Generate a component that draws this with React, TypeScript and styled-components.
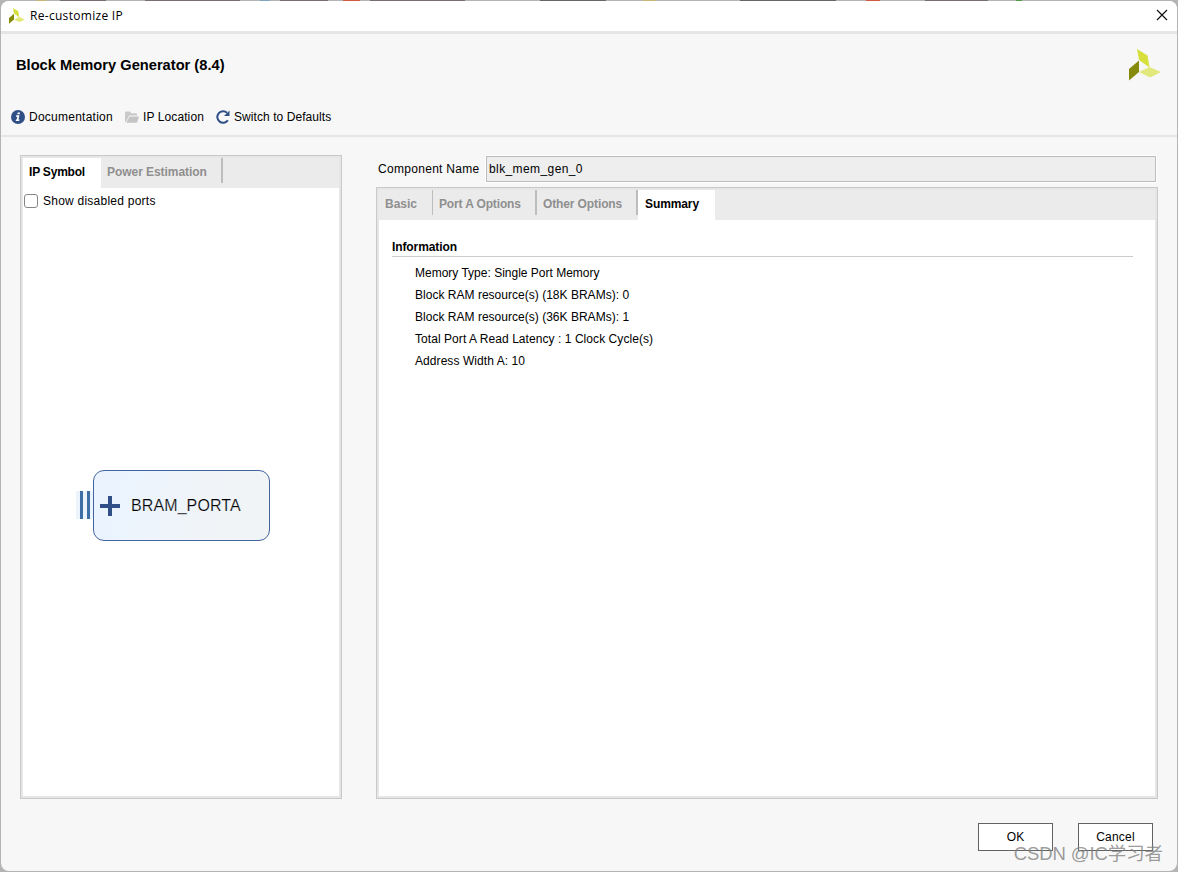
import React from "react";
import styled, { createGlobalStyle } from "styled-components";

const GlobalStyle = createGlobalStyle`
  *, *::before, *::after { box-sizing: border-box; }
  body {
    margin: 0;
    background: #b4b4b6;
    font: 12px/16px "Liberation Sans", Arial, sans-serif;
    color: #000;
    overflow: hidden;
  }
`;

const Desktop = styled.div`
  width: 1178px;
  height: 872px;
  padding: 1px;
  background: linear-gradient(
      90deg,
      transparent 36px, #c9b778 36px 46px, transparent 46px 60px, #77706f 60px 106px,
      transparent 106px 145px, #77706f 145px 240px, transparent 240px 260px, #7ea3bd 260px 270px,
      transparent 270px 280px, #77706f 280px 328px, transparent 328px 343px, #cf5a3f 343px 360px,
      transparent 360px 370px, #77706f 370px 465px, transparent 465px 540px, #66666a 540px 606px,
      transparent 606px 643px, #c9b778 643px 656px, transparent 656px 740px, #66666a 740px 836px,
      transparent 836px 866px, #cf5a3f 866px 880px, transparent 880px 925px, #77706f 925px 988px,
      transparent 988px 1016px, #4e9a45 1016px 1022px, transparent 1022px
    ) 0 0 / 100% 1px no-repeat;
`;

const Dialog = styled.div`
  width: 1176px;
  height: 870px;
  display: flex;
  flex-direction: column;
  background: #f7f7f7;
  border-radius: 8px;
  overflow: hidden;
`;

const Label = styled.span<{ $track?: number }>`
  white-space: pre;
  letter-spacing: ${(p) => p.$track ?? 0}px;
`;

const TitleBar = styled.header`
  display: flex;
  align-items: center;
  height: 33px;
  flex: none;
  background: #fff;
  border-bottom: 3px solid #e6e6e6;
  padding: 0 9px 0 8px;
`;

const WindowTitle = styled(Label)`
  flex: 1;
  margin-left: 5px;
  font-family: "Open Sans", "Noto Sans", sans-serif;
  font-size: 12px;
`;

const Header = styled.section`
  height: 103px;
  flex: none;
  display: flex;
  flex-direction: column;
  justify-content: space-between;
  border-bottom: 2px solid #e6e6e6;
  padding: 15px 16px 10px 10px;
`;

const HeadRow = styled.div`
  display: flex;
  justify-content: space-between;
  padding-left: 5px;
`;

const Heading = styled.h1`
  margin: 7px 0 0;
  font-size: 14.67px;
  line-height: 18px;
  font-weight: bold;
  white-space: pre;
`;

const Toolbar = styled.nav`
  display: flex;
  height: 16px;
`;

const Tool = styled.div<{ $width: number }>`
  display: flex;
  align-items: center;
  width: ${(p) => p.$width}px;
  gap: 4px;
  svg { flex: none; }
`;

const Body = styled.main`
  display: flex;
  height: 662px;
  flex: none;
  padding: 18px 19px 0;
`;

const Panel = styled.section<{ $width: number; $height: number }>`
  width: ${(p) => p.$width}px;
  height: ${(p) => p.$height}px;
  flex: none;
  display: flex;
  flex-direction: column;
  border: 1px solid #c9c9c9;
  box-shadow: inset 0 0 0 2px #e6e6e6;
  padding: 2px;
`;

const TabStrip = styled.div`
  display: flex;
  height: 30px;
  flex: none;
  background: #ebebeb;
`;

const Tab = styled.div<{ $width: number; $active?: boolean; $rule?: number; $track?: number; $indent?: number }>`
  width: ${(p) => p.$width}px;
  height: ${(p) => (p.$active ? 30 : 25)}px;
  padding: 6px 0 0 ${(p) => p.$indent ?? 6}px;
  font-weight: bold;
  white-space: pre;
  letter-spacing: ${(p) => p.$track ?? 0}px;
  color: ${(p) => (p.$active ? "#000" : "#8f8f8f")};
  background: ${(p) => (p.$active ? "#fff" : "transparent")};
  border-right: ${(p) => p.$rule ?? 0}px solid #bdbdbd;
`;

const Pane = styled.div`
  flex: 1;
  background: #fff;
`;

const CheckRow = styled.label`
  display: flex;
  align-items: center;
  height: 26px;
  padding-left: 1px;
  gap: 5px;
`;

const CheckBox = styled.span`
  width: 14px;
  height: 14px;
  border: 1px solid #858585;
  border-radius: 3px;
  background: #fff;
`;

const SymbolRow = styled.div`
  display: flex;
  align-items: flex-start;
  margin: 256px 0 0 53px;
`;

const PortHandle = styled.div`
  display: flex;
  gap: 4px;
  width: 17px;
  height: 28px;
  margin-top: 21px;
  padding-left: 4px;
  background: #ebf4fd;
`;

const PortBar = styled.span`
  width: 3px;
  background: #3d6fa5;
`;

const BlockSymbol = styled.div`
  display: flex;
  align-items: center;
  gap: 11px;
  width: 177px;
  height: 71px;
  padding-left: 6px;
  border: 1px solid #43659f;
  border-radius: 11px;
  background: linear-gradient(100deg, #ebf4fe 15%, #f0f4f8 60%, #f0f4f5);
`;

const PortName = styled(Label)`
  font-size: 16px;
  line-height: 20px;
  -webkit-text-stroke: 0.2px #edf4fa;
`;

const Main = styled.div`
  margin-left: 34px;
`;

const NameRow = styled.div`
  display: flex;
  align-items: center;
  height: 28px;
  margin-bottom: 4px;
  padding-left: 2px;
`;

const NameLabel = styled.div`
  width: 107px;
`;

const NameField = styled.div`
  width: 672px;
  height: 28px;
  border: 1px solid #fff;
`;

const FieldBox = styled.div`
  height: 26px;
  border: 1px solid #bcbcbc;
  background: #eee;
  padding: 4px 2px;
`;

const Summary = styled.div`
  width: 741px;
  margin-left: 13px;
  padding-top: 19px;
`;

const SectionTitle = styled.h2`
  margin: 0 0 5px;
  height: 18px;
  border-bottom: 1px solid #cbcbcb;
  font-size: 12px;
  line-height: 16px;
  letter-spacing: -0.1px;
`;

const InfoLine = styled.div`
  height: 22px;
  line-height: 22px;
  padding-left: 23px;
`;

const Footer = styled.footer`
  position: relative;
  display: flex;
  justify-content: flex-end;
  gap: 25px;
  padding: 24px 24px 0;
`;

const Button = styled.button`
  width: 75px;
  height: 28px;
  padding: 0;
  border: 1px solid #626262;
  background: #fff;
  font: inherit;
  color: inherit;
`;

const Watermark = styled.div`
  position: absolute;
  right: 14px;
  top: 42px;
  font: 18.5px/26px "Liberation Sans", "Noto Sans CJK SC", sans-serif;
  letter-spacing: -0.1px;
  white-space: pre;
  color: rgba(130, 130, 130, 0.8);
`;

const Logo = ({ size }: { size: number }) => (
  <svg width={size} height={size} viewBox="0 0 32 32">
    <path d="M8 0 18.500 6.500 20.500 18.500 10 11Z" fill="#d6df3b" />
    <path d="M0 20 10 11.500V23L0 31.500Z" fill="#868a0b" />
    <path d="M10 23 20.500 18 32 23 21 28.500Z" fill="#e2e97c" />
  </svg>
);

const CloseIcon = () => (
  <svg width="12" height="14" viewBox="0 0 12 14">
    <path d="M1 1 11 11M11 1 1 11" stroke="#111" strokeWidth="1.2" fill="none" />
  </svg>
);

const InfoIcon = () => (
  <svg width="14" height="14" viewBox="0 0 14 14">
    <circle cx="7" cy="7" r="7" fill="#304f87" />
    <path d="M6.700 2.400h2.300l-.4 1.900H6.300ZM5.200 5.200h3.200l-.9 4.300h1l-.3 1.500H4.700l.3-1.500h.7l.6-2.800H4.900Z" fill="#fff" />
  </svg>
);

const FolderIcon = () => (
  <svg width="14" height="12" viewBox="0 0 14 12">
    <path d="M0 11V1.500Q0 .5 1 .5h4l1.200 1.700H11q1 0 1 1V4.500H4.200L1.200 10.500Z" fill="#c9c9c9" />
    <path d="M4.500 5.500H14l-1.700 5.300q-.3.900-1.300.9H1.300Z" fill="#c4c4c4" />
  </svg>
);

const ReloadIcon = () => (
  <svg width="14" height="14" viewBox="0 0 14 14">
    <path d="M11.900 10.300A5.800 5.800 0 1 1 11 2.700" fill="none" stroke="#304f87" strokeWidth="2" />
    <path d="M13.500.5V6H8Z" fill="#304f87" />
  </svg>
);

const PlusIcon = () => (
  <svg width="20" height="20" viewBox="0 0 20 20">
    <path d="M8 0h4v8h8v4h-8v8H8v-8H0V8h8Z" fill="#304f87" />
  </svg>
);

const info = [
  { text: "Memory Type: Single Port Memory", track: 0 },
  { text: "Block RAM resource(s) (18K BRAMs): 0", track: 0.02 },
  { text: "Block RAM resource(s) (36K BRAMs): 1", track: 0.02 },
  { text: "Total Port A Read Latency : 1 Clock Cycle(s)", track: 0.06 },
  { text: "Address Width A: 10", track: 0.07 },
];

export default function App() {
  return (
    <Desktop>
      <GlobalStyle />
      <Dialog>
        <TitleBar>
          <Logo size={16} />
          <WindowTitle $track={0.3}>Re-customize IP</WindowTitle>
          <CloseIcon />
        </TitleBar>
        <Header>
          <HeadRow>
            <Heading>Block Memory Generator (8.4)</Heading>
            <Logo size={32} />
          </HeadRow>
          <Toolbar>
            <Tool $width={114}><InfoIcon /><Label $track={0.25}>Documentation</Label></Tool>
            <Tool $width={91}><FolderIcon /><Label $track={0.1}>IP Location</Label></Tool>
            <Tool $width={120}><ReloadIcon /><Label $track={0.07}>Switch to Defaults</Label></Tool>
          </Toolbar>
        </Header>
        <Body>
          <Panel $width={322} $height={644}>
            <TabStrip>
              <Tab $width={78} $active $track={-0.2}>IP Symbol</Tab>
              <Tab $width={122} $rule={2} $track={-0.05}>Power Estimation</Tab>
            </TabStrip>
            <Pane>
              <CheckRow><CheckBox /><Label $track={0.24}>Show disabled ports</Label></CheckRow>
              <SymbolRow>
                <PortHandle><PortBar /><PortBar /></PortHandle>
                <BlockSymbol><PlusIcon /><PortName $track={0.1}>BRAM_PORTA</PortName></BlockSymbol>
              </SymbolRow>
            </Pane>
          </Panel>
          <Main>
            <NameRow>
              <NameLabel><Label $track={0.3}>Component Name</Label></NameLabel>
              <NameField><FieldBox><Label $track={0.4}>blk_mem_gen_0</Label></FieldBox></NameField>
            </NameRow>
            <Panel $width={782} $height={612}>
              <TabStrip>
                <Tab $width={54} $rule={1}>Basic</Tab>
                <Tab $width={104} $rule={2} $track={-0.14}>Port A Options</Tab>
                <Tab $width={101} $rule={2} $track={-0.12}>Other Options</Tab>
                <Tab $width={77} $active $indent={7} $track={-0.1}>Summary</Tab>
              </TabStrip>
              <Pane>
                <Summary>
                  <SectionTitle>Information</SectionTitle>
                  {info.map((line) => (
                    <InfoLine key={line.text}><Label $track={line.track}>{line.text}</Label></InfoLine>
                  ))}
                </Summary>
              </Pane>
            </Panel>
          </Main>
        </Body>
        <Footer>
          <Button>OK</Button>
          <Button><Label $track={0.2}>Cancel</Label></Button>
          <Watermark>CSDN @IC学习者</Watermark>
        </Footer>
      </Dialog>
    </Desktop>
  );
}
